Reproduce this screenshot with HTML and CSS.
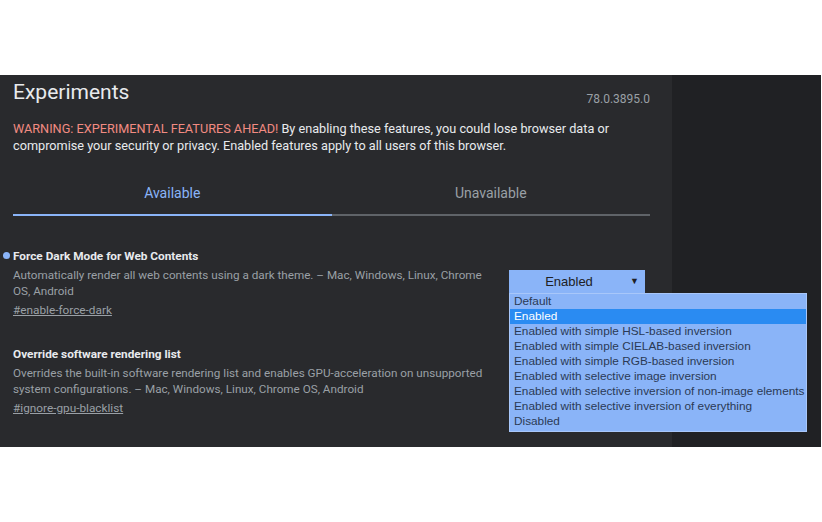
FILE: index.html
```html
<!DOCTYPE html>
<html>
<head>
<meta charset="utf-8">
<link rel="stylesheet" href="styles.css">
</head>
<body>
<div class="page">
  <div class="main">
    <div class="header">
      <h1 class="title">Experiments</h1>
      <span class="version">78.0.3895.0</span>
    </div>
    <p class="warning"><span class="warn-red">WARNING: EXPERIMENTAL FEATURES AHEAD!</span> By enabling these features, you could lose browser data or compromise your security or privacy. Enabled features apply to all users of this browser.</p>
    <div class="tabs">
      <div class="tab tab-active">Available</div>
      <div class="tab">Unavailable</div>
    </div>
    <div class="experiment">
      <div class="exp-text">
        <h2 class="exp-name"><span class="dot"></span>Force Dark Mode for Web Contents</h2>
        <p class="exp-desc">Automatically render all web contents using a dark theme. – Mac, Windows, Linux, Chrome OS, Android</p>
        <a class="exp-link">#enable-force-dark</a>
      </div>
      <div class="exp-control">
        <div class="select">Enabled<span class="arrow">▼</span></div>
        <ul class="options">
          <li>Default</li>
          <li class="selected">Enabled</li>
          <li>Enabled with simple HSL-based inversion</li>
          <li>Enabled with simple CIELAB-based inversion</li>
          <li>Enabled with simple RGB-based inversion</li>
          <li>Enabled with selective image inversion</li>
          <li>Enabled with selective inversion of non-image elements</li>
          <li>Enabled with selective inversion of everything</li>
          <li>Disabled</li>
        </ul>
      </div>
    </div>
    <div class="experiment exp-second">
      <div class="exp-text">
        <h2 class="exp-name">Override software rendering list</h2>
        <p class="exp-desc">Overrides the built-in software rendering list and enables GPU-acceleration on unsupported system configurations. – Mac, Windows, Linux, Chrome OS, Android</p>
        <a class="exp-link">#ignore-gpu-blacklist</a>
      </div>
    </div>
  </div>
  <div class="side"></div>
</div>
</body>
</html>
```

FILE: styles.css
```css
html, body {
  margin: 0;
  padding: 0;
  background: #ffffff;
}
body {
  font-family: Roboto, "Liberation Sans", sans-serif;
}
.page {
  margin-top: 75px;
  height: 372px;
  width: 821px;
  display: flex;
  background: #202124;
}
.main {
  width: 672px;
  box-sizing: border-box;
  background: #292a2d;
  padding: 0 22px 0 13px;
  color: #e8eaed;
}
.header {
  display: flex;
  justify-content: space-between;
  align-items: flex-end;
  height: 33px;
}
.title {
  margin: 0 0 3px;
  font-size: 21px;
  font-weight: 400;
  line-height: 26px;
  color: #e8eaed;
}
.version {
  font-size: 12px;
  color: #9aa0a6;
  line-height: 16px;
  padding-bottom: 1px;
}
.warning {
  margin: 12px 0 0;
  font-size: 12.7px;
  line-height: 17px;
  color: #e8eaed;
}
.warn-red {
  color: #f28b82;
}
.tabs {
  display: flex;
  margin-top: 29px;
}
.tab {
  flex: 1;
  text-align: center;
  font-size: 14px;
  line-height: 20px;
  padding-bottom: 11px;
  color: #9aa0a6;
  border-bottom: 2px solid #5f6368;
}
.tab-active {
  color: #8ab4f8;
  border-bottom-color: #8ab4f8;
}
.experiment {
  display: flex;
  margin-top: 32px;
}
.exp-second {
  margin-top: 28px;
}
.exp-text {
  width: 482px;
}
.exp-name {
  position: relative;
  margin: 0;
  font-size: 11.8px;
  font-weight: 700;
  line-height: 16px;
  color: #e8eaed;
}
.dot {
  position: absolute;
  left: -10px;
  top: 4px;
  width: 7px;
  height: 7px;
  border-radius: 50%;
  background: #8ab4f8;
}
.exp-desc {
  margin: 3px 0 0;
  font-size: 11.7px;
  line-height: 16px;
  color: #9aa0a6;
}
.exp-link {
  display: inline-block;
  margin-top: 2px;
  font-size: 11.8px;
  line-height: 16px;
  color: #9aa0a6;
  text-decoration: underline;
}
.exp-control {
  position: relative;
  margin-left: 14px;
  padding-top: 22px;
}
.select {
  position: relative;
  width: 136px;
  height: 23px;
  box-sizing: border-box;
  background: #8ab4f8;
  color: #202124;
  font-family: "Liberation Sans", Arial, sans-serif;
  font-size: 13px;
  line-height: 23px;
  text-align: center;
  padding-right: 16px;
}
.arrow {
  position: absolute;
  right: 6px;
  top: 0;
  font-size: 9px;
}
.options {
  position: absolute;
  left: 0;
  top: 45px;
  width: 298px;
  box-sizing: border-box;
  margin: 0;
  padding: 0 0 2px;
  list-style: none;
  background: #8ab4f8;
  border: 1px solid #a8c7fa;
  font-family: "Liberation Sans", Arial, sans-serif;
  font-size: 11.8px;
  line-height: 15px;
  color: #2b3a55;
  z-index: 2;
}
.options li {
  padding-left: 4px;
  white-space: nowrap;
}
.options li.selected {
  background: #2a8bf2;
  color: #ffffff;
}
.side {
  flex: 1;
}
```
